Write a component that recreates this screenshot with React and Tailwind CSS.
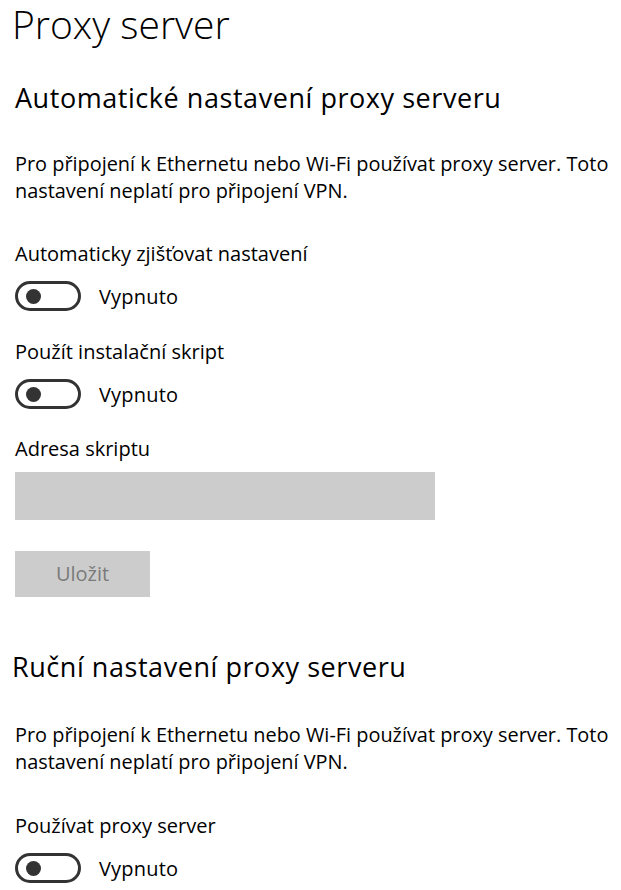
import React from "react";

const font = { fontFamily: '"Open Sans", "Noto Sans", sans-serif' };

function Toggle({ className = "" }) {
  return (
    <div className={`flex items-center h-[30px] ${className}`}>
      <div className="w-[66px] h-[30px] rounded-full border-[3px] border-[#333333] flex items-center pl-[8px] box-border">
        <div className="w-[15px] h-[15px] rounded-full bg-[#333333]" />
      </div>
      <span className="ml-[18px] text-[20px] leading-[27px] tracking-[0.2px] text-black">Vypnuto</span>
    </div>
  );
}

function Body({ className = "" }) {
  return (
    <p className={`text-[19.9px] leading-[27px] text-black whitespace-nowrap ${className}`}>
      Pro připojení k Ethernetu nebo Wi-Fi používat proxy server. Toto
      <br />
      nastavení neplatí pro připojení VPN.
    </p>
  );
}

function Label({ children, className = "" }) {
  return (
    <div className={`ml-[15px] text-[20px] leading-[27px] text-black ${className}`}>
      {children}
    </div>
  );
}

export default function App() {
  return (
    <div className="w-[621px] h-[890px] bg-white overflow-hidden flex flex-col" style={font}>
      <h1 className="ml-[12px] text-[39px] leading-[48px] font-light text-black">Proxy server</h1>
      <h2 className="ml-[15px] mt-[34px] text-[27px] leading-[32px] tracking-[0.55px] font-normal text-black">
        Automatické nastavení proxy serveru
      </h2>
      <Body className="ml-[15px] mt-[36px]" />
      <Label className="mt-[36px]">Automaticky zjišťovat nastavení</Label>
      <Toggle className="ml-[15px] mt-[14px]" />
      <Label className="mt-[27px]">Použít instalační skript</Label>
      <Toggle className="ml-[15px] mt-[14px]" />
      <Label className="mt-[26px]">Adresa skriptu</Label>
      <div className="ml-[15px] mt-[10px] w-[420px] h-[48px] bg-[#cccccc]" />
      <div className="ml-[15px] mt-[31px] w-[135px] h-[46px] bg-[#cccccc] flex items-center justify-center text-[20px] text-[#7a7a7a]">
        Uložit
      </div>
      <h2 className="ml-[12px] mt-[54px] text-[27px] leading-[32px] tracking-[0.55px] font-normal text-black">
        Ruční nastavení proxy serveru
      </h2>
      <Body className="ml-[15px] mt-[38px]" />
      <Label className="mt-[37px]">Používat proxy server</Label>
      <Toggle className="ml-[15px] mt-[14px]" />
    </div>
  );
}
